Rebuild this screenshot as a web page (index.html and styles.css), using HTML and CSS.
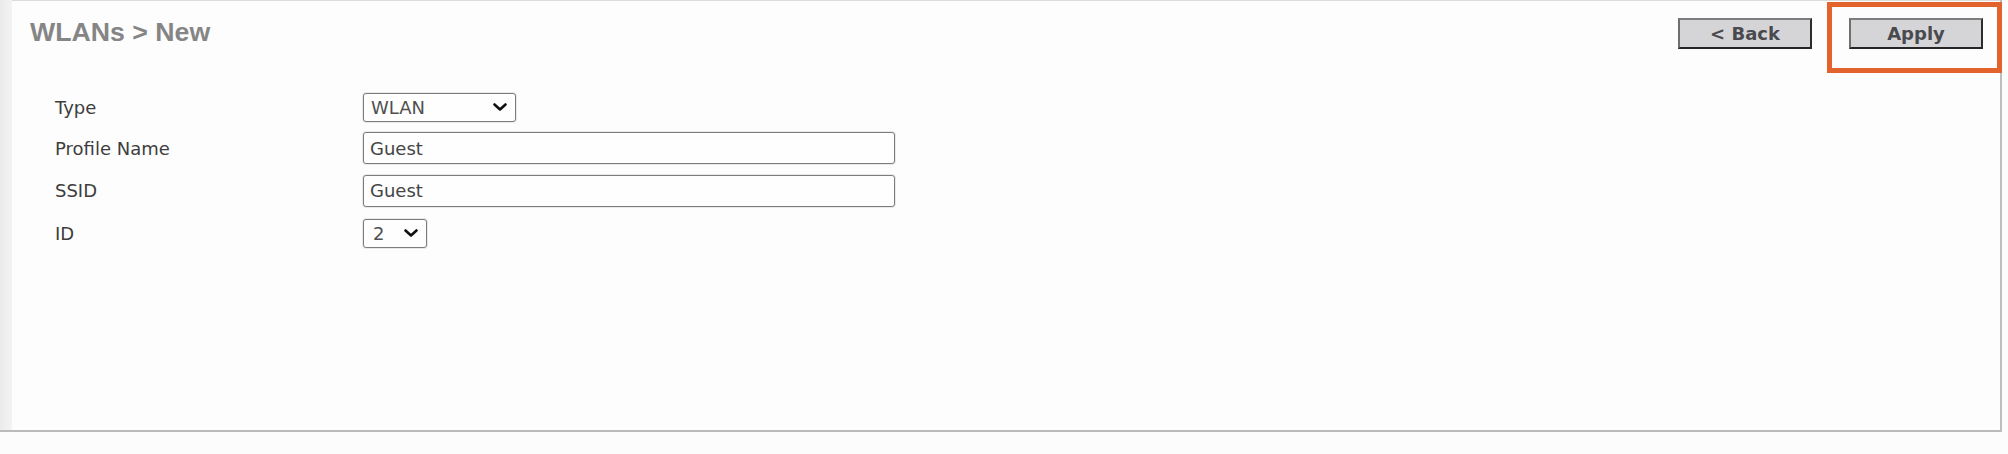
FILE: index.html
```html
<!DOCTYPE html>
<html lang="en">
<head>
<meta charset="utf-8">
<title>WLANs &gt; New</title>
<link rel="stylesheet" href="styles.css">
</head>
<body>
<div class="frame">
  <aside class="rail"></aside>
  <main class="panel">
    <header class="head">
      <h1 class="title">WLANs &gt; New</h1>
      <div class="actions">
        <button class="btn" type="button">&lt; Back</button>
        <div class="apply-wrap">
          <button class="btn" type="button">Apply</button>
          <span class="highlight"></span>
        </div>
      </div>
    </header>
    <form class="form">
      <label class="label" for="type">Type</label>
      <span class="select select-type">
        <select id="type"><option>WLAN</option></select>
        <svg class="chev" width="14" height="8" viewBox="0 0 14 8"><path d="M1.5 1.5 L7 6.5 L12.5 1.5" fill="none" stroke="#111" stroke-width="2.6" stroke-linecap="round" stroke-linejoin="round"/></svg>
      </span>

      <label class="label" for="profile">Profile Name</label>
      <input class="text" id="profile" type="text" value="Guest">

      <label class="label" for="ssid">SSID</label>
      <input class="text" id="ssid" type="text" value="Guest">

      <label class="label" for="wid">ID</label>
      <span class="select select-id">
        <select id="wid"><option>2</option></select>
        <svg class="chev" width="14" height="8" viewBox="0 0 14 8"><path d="M1.5 1.5 L7 6.5 L12.5 1.5" fill="none" stroke="#111" stroke-width="2.6" stroke-linecap="round" stroke-linejoin="round"/></svg>
      </span>
    </form>
  </main>
</div>
</body>
</html>
```

FILE: styles.css
```css
html, body {
  margin: 0;
  padding: 0;
  background: #fcfcfc;
}

body {
  width: 2008px;
  height: 454px;
  overflow: hidden;
  font-family: "DejaVu Sans", Verdana, sans-serif;
}

.frame {
  display: flex;
  width: 2002px;
  height: 432px;
  box-sizing: border-box;
  border-right: 2px solid #bdbdbd;
  border-bottom: 2px solid #bababa;
}

.rail {
  width: 12px;
  flex: none;
  background: linear-gradient(to right, #ebebeb, #f3f3f3);
}

.panel {
  flex: 1;
  background: #fdfdfd;
  border-top: 1px solid #dcdcdc;
  padding: 0 17px 0 18px;
}

.head {
  display: flex;
  justify-content: space-between;
  align-items: flex-start;
  height: 49px;
}

.title {
  margin: 16px 0 0;
  font-family: "Liberation Sans", Arial, sans-serif;
  font-size: 26.7px;
  line-height: 30px;
  font-weight: bold;
  color: #858585;
}

.actions {
  display: flex;
  gap: 37px;
  padding-top: 17px;
}

.apply-wrap {
  position: relative;
}

.btn {
  display: block;
  width: 134px;
  height: 31px;
  box-sizing: border-box;
  margin: 0;
  padding: 0;
  background: #d5d5d8;
  border: 2px solid;
  border-color: #7d7d7d #2c2c2c #262626 #6f6f6f;
  border-radius: 0;
  font-family: "DejaVu Sans", Verdana, sans-serif;
  font-size: 18px;
  font-weight: bold;
  color: #4a4a4e;
  line-height: 25px;
  text-align: center;
}

.highlight {
  position: absolute;
  left: -22px;
  top: -16px;
  width: 175px;
  height: 71px;
  box-sizing: border-box;
  border: 5px solid #e2642c;
  pointer-events: none;
}

.form {
  display: grid;
  grid-template-columns: 308px auto;
  grid-template-rows: 40px 42px 43px 43px;
  align-items: center;
  justify-items: start;
  margin: 37px 0 0 25px;
}

.label {
  font-size: 18px;
  color: #3d3d3d;
}

.text {
  width: 532px;
  height: 32px;
  box-sizing: border-box;
  margin: 0;
  padding: 0 6px;
  border: 1px solid #7c7c7c;
  border-radius: 3px;
  box-shadow: 0 0 0 1px rgba(0, 0, 0, 0.08);
  background: #fefefe;
  font-family: "DejaVu Sans", Verdana, sans-serif;
  font-size: 18px;
  color: #454545;
}

.select {
  position: relative;
  display: block;
}

.select select {
  display: block;
  height: 29px;
  box-sizing: border-box;
  margin: 0;
  padding: 0 0 0 7px;
  appearance: none;
  -webkit-appearance: none;
  border: 1px solid #7c7c7c;
  border-radius: 3px;
  box-shadow: 0 0 0 1px rgba(0, 0, 0, 0.08);
  background: #fefefe;
  font-family: "DejaVu Sans", Verdana, sans-serif;
  font-size: 18px;
  color: #505050;
}

.select-type select {
  width: 153px;
}

.select-id select {
  width: 64px;
  padding-left: 9px;
}

.chev {
  position: absolute;
  right: 9px;
  top: 10px;
  pointer-events: none;
}
```
